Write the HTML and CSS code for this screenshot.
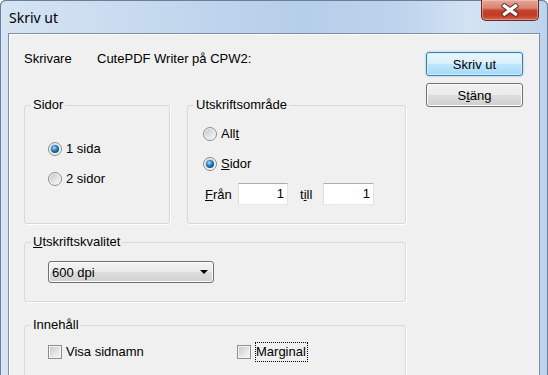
FILE: index.html
```
<!doctype html>
<html lang="sv">
<head>
    <meta charset="UTF-8">
    <title>Skriv ut</title>
    <link rel="stylesheet" href="styles.css">
</head>
<body>
    <div class="window">
        <div class="titlebar">
            <span class="title">Skriv ut</span>
            <button class="close_btn" aria-label="Stäng">
                <svg width="18" height="14" viewBox="0 0 18 14">
                    <path d="M3.5 3 L14.5 11 M14.5 3 L3.5 11" stroke="#4a2a26" stroke-width="5.5" stroke-linecap="square" fill="none" opacity="0.75"/>
                    <path d="M3.5 3 L14.5 11 M14.5 3 L3.5 11" stroke="#ffffff" stroke-width="3.2" stroke-linecap="square" fill="none"/>
                </svg>
            </button>
        </div>
        <div class="client">
            <div class="main">
                <div class="printer_row">
                    <span class="printer_label">Skrivare</span>
                    <span>CutePDF Writer på CPW2:</span>
                </div>

                <div class="group_row">
                    <fieldset class="group group_pages">
                        <legend>Sidor</legend>
                        <div class="group_body">
                            <div class="option"><span class="radio checked"></span><span>1 sida</span></div>
                            <div class="option"><span class="radio"></span><span>2 sidor</span></div>
                        </div>
                    </fieldset>
                    <fieldset class="group group_range">
                        <legend>Utskriftsområde</legend>
                        <div class="group_body">
                            <div class="option"><span class="radio"></span><span>All<u>t</u></span></div>
                            <div class="option"><span class="radio checked"></span><span><u>S</u>idor</span></div>
                            <div class="range_row">
                                <span class="from_label"><u>F</u>rån</span>
                                <span class="textbox textbox_from">1</span>
                                <span class="till_label">t<u>i</u>ll</span>
                                <span class="textbox textbox_to">1</span>
                            </div>
                        </div>
                    </fieldset>
                </div>

                <fieldset class="group group_quality">
                    <legend><u>U</u>tskriftskvalitet</legend>
                    <div class="group_body">
                        <div class="combo">
                            <span>600 dpi</span>
                            <span class="combo_arrow"></span>
                        </div>
                    </div>
                </fieldset>

                <fieldset class="group group_content">
                    <legend>Innehåll</legend>
                    <div class="group_body">
                        <div class="check_row">
                            <div class="option"><span class="checkbox"></span><span>Visa sidnamn</span></div>
                            <div class="option"><span class="checkbox"></span><span class="focus">Marginal</span></div>
                        </div>
                    </div>
                </fieldset>
            </div>

            <div class="actions">
                <button class="btn btn_default">Skriv ut</button>
                <button class="btn">S<u>t</u>äng</button>
            </div>
        </div>
    </div>
</body>
</html>
```

FILE: styles.css
```
body {
    margin: 0;
    padding: 0;
    font-family: "Liberation Sans", Arial, sans-serif;
    font-size: 13px;
    color: #000;
    background: #fff;
}

.window {
    width: 548px;
    height: 375px;
    box-sizing: border-box;
    padding: 0 8px;
    display: flex;
    flex-direction: column;
    overflow: hidden;
    border-radius: 6px 6px 0 0;
    background: linear-gradient(90deg, #d6e4f3 0%, #c7daee 25%, #b5cee9 55%, #bcd3ec 72%, #d3e3f3 86%, #bcd3ec 100%);
    box-shadow: inset 1px 0 0 #6a7f98, inset -1px 0 0 #6a7f98, inset 0 1px 0 #6a7f98;
}

.titlebar {
    height: 33px;
    flex-shrink: 0;
    display: flex;
    justify-content: space-between;
    align-items: flex-start;
}

.title {
    font-family: "Noto Sans", "Open Sans", sans-serif;
    font-size: 14px;
    line-height: 20px;
    padding: 8px 0 0 1px;
    color: #000;
}

.close_btn {
    width: 58px;
    height: 21px;
    margin-right: 1px;
    padding: 0;
    display: flex;
    justify-content: center;
    align-items: center;
    border: 1px solid #5e2a22;
    border-top: none;
    border-radius: 0 0 5px 5px;
    background: linear-gradient(#e6a898 0%, #d98472 40%, #c8432e 52%, #c23a26 75%, #d4624a 100%);
    box-shadow: inset 0 0 0 1px rgba(255, 210, 200, 0.45);
}

.client {
    flex: 1;
    display: flex;
    gap: 20px;
    padding: 0 15px;
    background: #f0f0f0;
    border: 1px solid #7d90a8;
    border-bottom: none;
    box-shadow: inset 1px 1px 0 #fdfdfd;
}

.main {
    width: 382px;
    padding-top: 17px;
}

.printer_row {
    display: flex;
    line-height: 16px;
    height: 16px;
}

.printer_label {
    width: 73px;
}

.group_row {
    display: flex;
    gap: 17px;
    margin-top: 30px;
}

.group {
    margin: 0;
    padding: 0;
    min-width: 0;
    border: 1px solid #d5d9dd;
    border-radius: 3px;
    box-shadow: 1px 1px 0 #fff;
}

.group legend {
    margin-left: 6px;
    padding: 0 2px;
    line-height: 16px;
}

.group_pages {
    width: 146px;
    box-sizing: border-box;
}

.group_pages .group_body {
    padding: 28px 0 0 23px;
}

.group_range {
    width: 219px;
    box-sizing: border-box;
}

.group_range .group_body {
    padding: 13px 0 18px 15px;
}

.option {
    display: flex;
    align-items: center;
    gap: 4px;
    height: 16px;
    line-height: 16px;
}

.option + .option {
    margin-top: 14px;
}

.radio {
    width: 14px;
    height: 14px;
    box-sizing: border-box;
    border: 1px solid #8a8c8e;
    border-radius: 50%;
    display: flex;
    justify-content: center;
    align-items: center;
    background: linear-gradient(135deg, #bfc1c3 0%, #e4e4e4 55%, #fbfbfb 100%);
    box-shadow: inset 0 0 0 1px #f6f6f6;
}

.radio.checked::after {
    content: "";
    width: 8px;
    height: 8px;
    border-radius: 50%;
    background: radial-gradient(circle at 40% 35%, #bfe9fc 0, #3f9bd2 28%, #16609a 60%, #0a365e 100%);
}

.range_row {
    display: flex;
    align-items: center;
    margin: 11px 0 0 2px;
}

.from_label {
    width: 33px;
}

.till_label {
    width: 23px;
    padding-left: 12px;
}

.textbox {
    height: 22px;
    box-sizing: border-box;
    line-height: 20px;
    text-align: right;
    padding-right: 3px;
    background: #fff;
    border: 1px solid;
    border-color: #abadb3 #e2e3ea #e3e9ef #dbdfe6;
}

.textbox_from {
    width: 50px;
}

.textbox_to {
    width: 51px;
}

.group_quality {
    margin-top: 10px;
}

.group_quality .group_body {
    padding: 11px 0 18px 23px;
}

.combo {
    width: 166px;
    height: 22px;
    box-sizing: border-box;
    display: flex;
    justify-content: space-between;
    align-items: center;
    padding: 0 5px 0 3px;
    border: 1px solid #707070;
    border-radius: 3px;
    background: linear-gradient(#f3f3f3 0%, #ebebeb 50%, #dddddd 50%, #d0d0d0 100%);
    box-shadow: inset 0 0 0 1px #fbfbfb;
}

.combo_arrow {
    width: 0;
    height: 0;
    border-left: 4px solid transparent;
    border-right: 4px solid transparent;
    border-top: 4px solid #000;
}

.group_content {
    margin-top: 15px;
    height: 80px;
}

.group_content .group_body {
    padding: 11px 0 0 23px;
}

.check_row {
    display: grid;
    grid-template-columns: 189px auto;
}

.check_row .option + .option {
    margin-top: 0;
}

.checkbox {
    width: 14px;
    height: 14px;
    box-sizing: border-box;
    border: 1px solid #8e8f8f;
    background: linear-gradient(135deg, #c3c6cb 0%, #e4e5e7 55%, #f7f7f7 100%);
    box-shadow: inset 0 0 0 1px #f4f4f4;
}

.focus {
    padding: 2px 2px 2px 1px;
    line-height: 16px;
    outline: 1px dotted #000;
    outline-offset: -1px;
}

.actions {
    display: flex;
    flex-direction: column;
    gap: 7px;
    padding-top: 18px;
}

.btn {
    width: 97px;
    height: 24px;
    padding: 0;
    font-family: "Liberation Sans", Arial, sans-serif;
    font-size: 13px;
    color: #000;
    border: 1px solid #707070;
    border-radius: 3px;
    background: linear-gradient(#f2f2f2 0%, #ebebeb 50%, #dddddd 50%, #cfcfcf 100%);
    box-shadow: inset 0 0 0 1px #fcfcfc;
}

.btn_default {
    border-color: #3c7fb1;
    background: linear-gradient(#eaf6fd 0%, #d9f0fc 50%, #bee6fd 50%, #a7d9f5 100%);
    box-shadow: inset 0 0 0 1px #d3ecfa, 0 0 2px #6ebbe8;
}
```
